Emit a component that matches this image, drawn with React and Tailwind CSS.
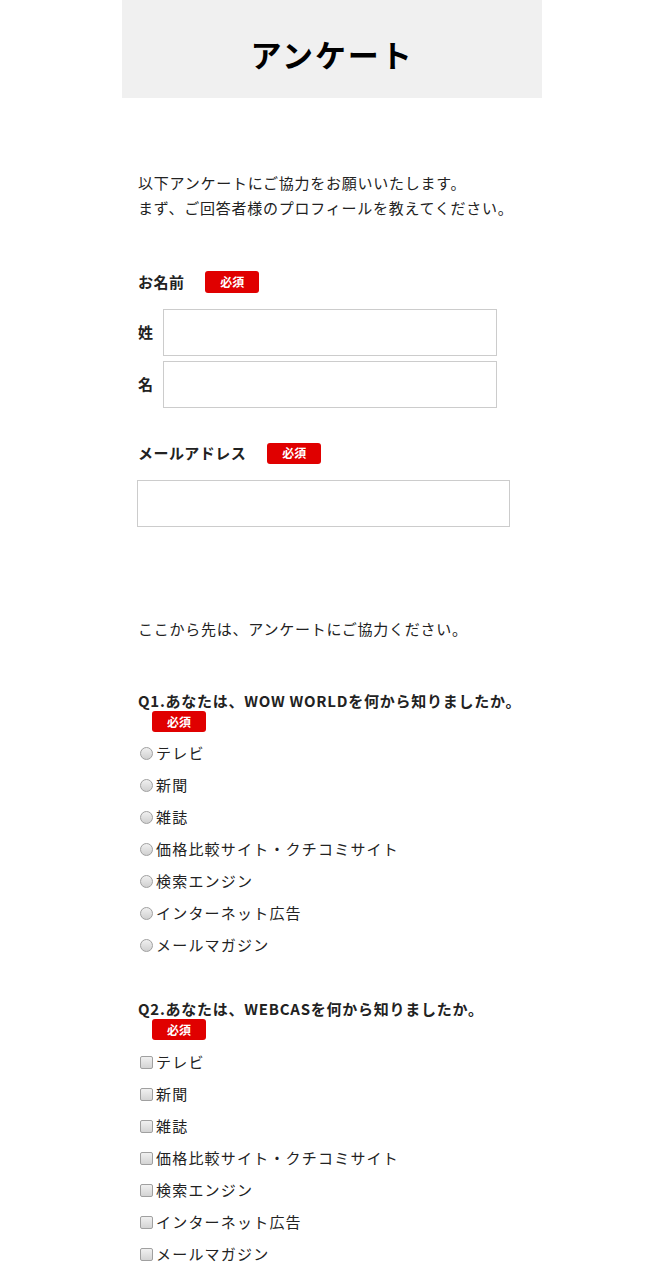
const font = { fontFamily: '"Noto Sans CJK JP", "Noto Sans", sans-serif' };

const options = [
  'テレビ',
  '新聞',
  '雑誌',
  '価格比較サイト・クチコミサイト',
  '検索エンジン',
  'インターネット広告',
  'メールマガジン',
];

function Badge({ className = '' }) {
  return (
    <span className={`flex items-center justify-center w-[54px] h-[21px] rounded-[3px] bg-[#e00000] text-white text-[12px] font-bold leading-none ${className}`}>
      必須
    </span>
  );
}

function Radio() {
  return (
    <span className="inline-block w-[13px] h-[13px] ml-[2px] mr-[3px] rounded-full border border-[#a0a0a0] bg-[linear-gradient(#f0f0f0,#d0d0d0)]" />
  );
}

function Check() {
  return (
    <span className="inline-block w-[13px] h-[13px] ml-[2px] mr-[3px] rounded-[2px] border border-[#a0a0a0] bg-[linear-gradient(#f0f0f0,#d4d4d4)]" />
  );
}

function Question({ title, type, className = '', listGap = 'mt-[5px]' }) {
  return (
    <div className={className}>
      <h3 className="text-[15px] font-bold leading-[20px] tracking-[0.05em]">{title}</h3>
      <Badge className="ml-[14px]" />
      <ul className={listGap}>
        {options.map(o => (
          <li key={o} className="flex items-center h-[32px] text-[15px] tracking-[0.08em]">
            {type === 'radio' ? <Radio /> : <Check />}
            <span>{o}</span>
          </li>
        ))}
      </ul>
    </div>
  );
}

export default function App() {
  return (
    <div className="bg-white text-[#222] min-h-[1286px]" style={font}>
      <div className="w-[420px] ml-[122px] pb-6">
        <header className="h-[98px] pt-[10px] bg-[#f0f0f0] flex items-center justify-center">
          <h1 className="text-[31px] font-bold tracking-[0.06em] text-black">アンケート</h1>
        </header>

        <div className="px-4">
          <p className="mt-[72px] text-[15px] leading-[25px] tracking-[0.05em]">
            以下アンケートにご協力をお願いいたします。<br />
            まず、ご回答者様のプロフィールを教えてください。
          </p>

          <div className="mt-[51px] flex items-center h-[22px]">
            <span className="text-[15px] font-bold tracking-[0.03em]">お名前</span>
            <Badge className="ml-[21px] h-[22px]" />
          </div>
          <div className="mt-4 flex items-center">
            <span className="w-[25px] text-[15px] font-bold">姓</span>
            <input className="w-[334px] h-[47px] border border-[#ccc] outline-none" />
          </div>
          <div className="mt-[5px] flex items-center">
            <span className="w-[25px] text-[15px] font-bold">名</span>
            <input className="w-[334px] h-[47px] border border-[#ccc] outline-none" />
          </div>

          <div className="mt-[34px] flex items-center h-[22px]">
            <span className="text-[15px] font-bold tracking-[0.03em]">メールアドレス</span>
            <Badge className="ml-[21px]" />
          </div>
          <input className="mt-4 -ml-px block w-[373px] h-[47px] border border-[#ccc] outline-none" />

          <p className="mt-[89px] text-[15px] leading-[25px] tracking-[0.05em]">
            ここから先は、アンケートにご協力ください。
          </p>

          <Question className="mt-[50px]" type="radio" title="Q1.あなたは、WOW WORLDを何から知りましたか。" />
          <Question className="mt-[38px]" type="check" listGap="mt-[6px]" title="Q2.あなたは、WEBCASを何から知りましたか。" />
        </div>
      </div>
    </div>
  );
}
